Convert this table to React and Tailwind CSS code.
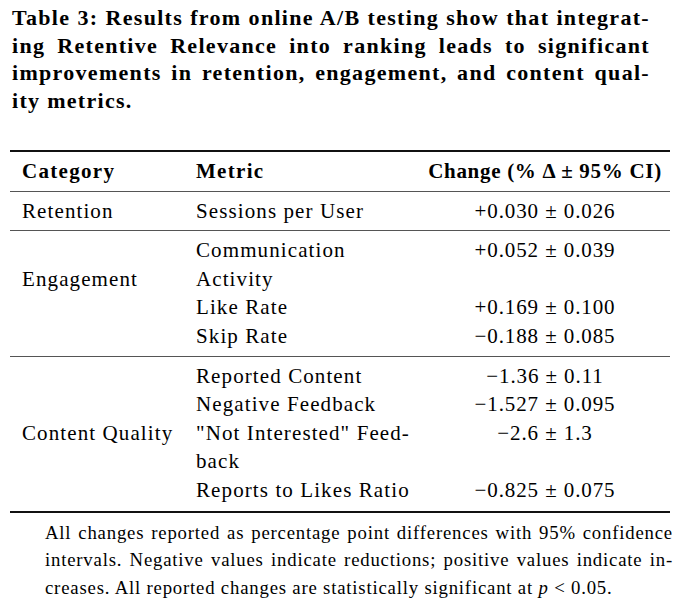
const captionLines = [
  "Table 3: Results from online A/B testing show that integrat-",
  "ing Retentive Relevance into ranking leads to significant",
  "improvements in retention, engagement, and content qual-",
  "ity metrics.",
];

const groups = [
  {
    category: "Retention",
    offset: "pt-0",
    rows: [{ lines: ["Sessions per User"], value: "+0.030 ± 0.026" }],
  },
  {
    category: "Engagement",
    offset: "pt-[28.6px]",
    rows: [
      { lines: ["Communication", "Activity"], value: "+0.052 ± 0.039" },
      { lines: ["Like Rate"], value: "+0.169 ± 0.100" },
      { lines: ["Skip Rate"], value: "−0.188 ± 0.085" },
    ],
  },
  {
    category: "Content Quality",
    offset: "pt-[57.2px]",
    rows: [
      { lines: ["Reported Content"], value: "−1.36 ± 0.11" },
      { lines: ["Negative Feedback"], value: "−1.527 ± 0.095" },
      { lines: ['"Not Interested" Feed-', "back"], value: "−2.6 ± 1.3" },
      { lines: ["Reports to Likes Ratio"], value: "−0.825 ± 0.075" },
    ],
  },
];

const App = () => {
  return (
    <div className="w-[680px] min-h-[599px] bg-white text-black font-['Liberation_Serif',serif]">
      {/* caption, one block per typeset line so the justification matches */}
      <div className="pl-[12px] pr-[30px] pt-[4px] text-[22px] leading-[27.5px] font-bold tracking-[1.3px]">
        {captionLines.map((line, i) => (
          <div
            key={i}
            className={
              i < captionLines.length - 1
                ? "whitespace-nowrap text-justify [text-align-last:justify]"
                : "whitespace-nowrap text-left"
            }
          >
            {line}
          </div>
        ))}
      </div>

      <div className="mx-[10px] mt-[36px] border-t-2 border-b-2 border-[#111] text-[21px] leading-[28.6px] tracking-[1.1px]">
        <div className="grid grid-cols-[174px_236px_1fr] pt-[5px] pb-[5px] font-bold">
          <div className="pl-[12px] tracking-[1.3px]">Category</div>
          <div className="pl-[12px] tracking-[1.3px]">Metric</div>
          <div className="text-center tracking-[0.7px]">Change (% Δ ± 95% CI)</div>
        </div>

        {groups.map((group, gi) => (
          <div
            key={group.category}
            className={
              "grid grid-cols-[174px_1fr] border-t-[1.5px] border-[#555] pt-[5px] " +
              (gi === groups.length - 1 ? "pb-[6px]" : "pb-[5px]")
            }
          >
            <div className={"pl-[12px] " + group.offset}>{group.category}</div>
            <div className="flex flex-col">
              {group.rows.map((row, ri) => (
                <div key={ri} className="grid grid-cols-[236px_1fr]">
                  <div className="pl-[12px]">
                    {row.lines.map((l, li) => (
                      <div key={li}>{l}</div>
                    ))}
                  </div>
                  <div className="text-center tracking-[0.9px]">{row.value}</div>
                </div>
              ))}
            </div>
          </div>
        ))}
      </div>

      <div className="pl-[45px] pr-[7px] pt-[6px] text-[18.75px] leading-[27.5px] tracking-[0.8px]">
        <div className="whitespace-nowrap text-justify [text-align-last:justify]">
          All changes reported as percentage point differences with 95% confidence
        </div>
        <div className="whitespace-nowrap text-justify [text-align-last:justify]">
          intervals. Negative values indicate reductions; positive values indicate in-
        </div>
        <div className="whitespace-nowrap">
          creases. All reported changes are statistically significant at{" "}
          <i>p</i> &lt; 0.05.
        </div>
      </div>
    </div>
  );
};

export default App;
